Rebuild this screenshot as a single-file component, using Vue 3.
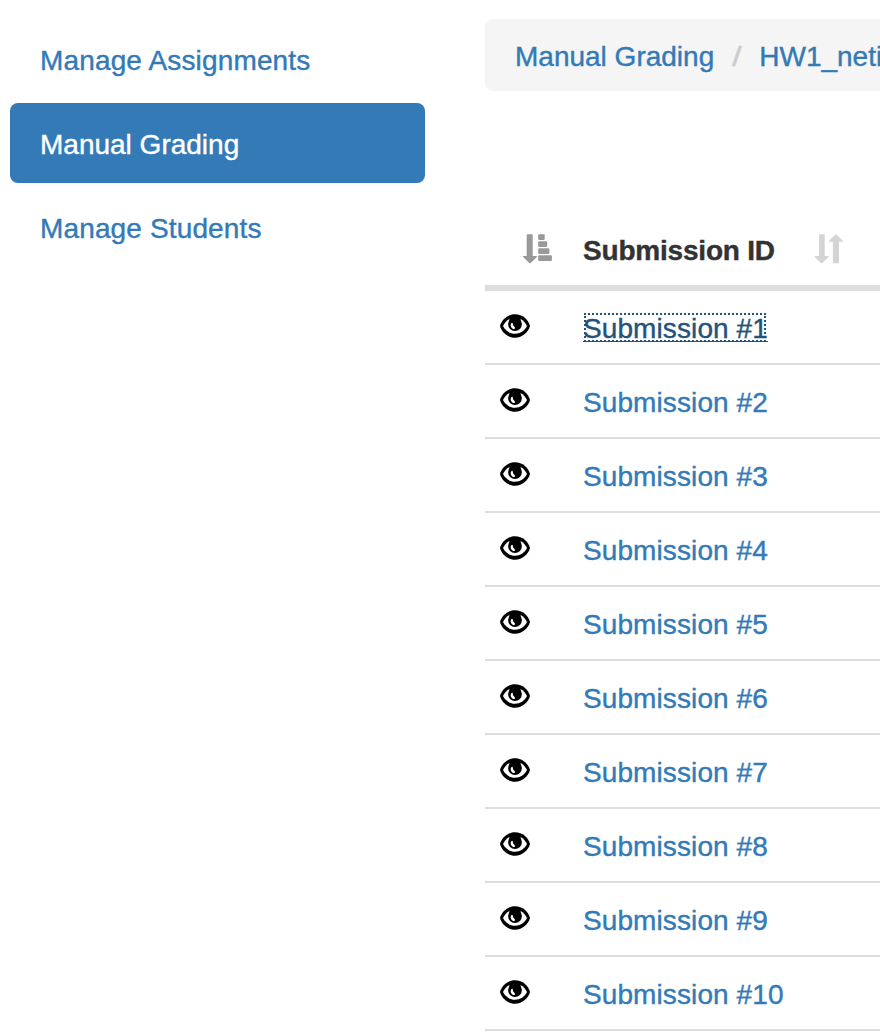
<script setup>
const rows = Array.from({ length: 10 }, (_, i) => i + 1)
</script>

<template>
  <main class="page">
    <nav class="side">
      <a class="link assignments">Manage Assignments</a>
      <a class="link active">Manual Grading</a>
      <a class="link students">Manage Students</a>
    </nav>
    <section class="content">
      <div class="crumbs">
        <a>Manual Grading</a>
        <i class="slash">/</i>
        <a>HW1_neti</a>
      </div>
      <div class="head">
        <svg class="sort" width="32" height="32" viewBox="0 0 32 32">
          <path d="M5.5 1.3h4.400q.8 0 .8.8V23h3.600q1.300 0 .6 1l-6.200 6q-.7.7-1.400 0l-6.200-6q-.7-1 .6-1h3V2.100q0-.8.8-.8z" />
          <rect x="16.2" y="1.3" width="6.5" height="5.6" rx="1" />
          <rect x="16.2" y="8.3" width="9" height="5.6" rx="1" />
          <rect x="16.2" y="15.3" width="11.2" height="5.6" rx="1" />
          <rect x="16.2" y="22.3" width="13.7" height="5.6" rx="1" />
        </svg>
        <b>Submission ID</b>
        <svg class="both" width="32" height="32" viewBox="0 0 32 32">
          <path d="M6 1.3h3.900q.8 0 .8.8V23H14q1.300 0 .6 1l-6.200 6q-.7.7-1.400 0l-6.200-6q-.7-1 .6-1h3.700V2.100q0-.8.8-.8zM19.700 30.200h4.500q.8 0 .8-.8V8.700h3.200q1.300 0 .6-1l-6.200-6q-.7-.7-1.400 0l-6.200 6q-.7 1 .6 1h3.300v20.700q0 .8.8.8z" />
        </svg>
      </div>
      <div v-for="n in rows" :key="n" class="row">
        <svg class="eye" width="30" height="24" viewBox="0 0 30 24">
          <path d="M0 12C1.500 6 7.500 .3 15 .3S28.500 6 30 12C28.500 18 22.500 23.700 15 23.700S1.500 18 0 12z" />
          <path class="white" d="M3 12C4.300 9 6.600 6.500 9.500 4.900H20.500C23.400 6.500 25.700 9 27 12C24.500 16.800 20.200 19.700 15 19.700S5.500 16.800 3 12z" />
          <path d="M9.500 5L12 3H18L20.500 5V7H9.500z" />
          <circle cx="15" cy="10.100" r="6.900" />
          <path class="white" d="M11.500 9C10.100 10.300 10.500 13.500 12.700 14.800Q14.600 15.700 15 13.900Q14.800 12.900 13.800 12.300Q12.800 11.500 12.900 10Q12.600 8.300 11.500 9z" />
        </svg>
        <a :class="{ focus: n === 1 }">Submission #{{ n }}</a>
      </div>
    </section>
  </main>
</template>

<style>
body { background: #fff; }
</style>
<style scoped>
.page { display: flex; width: 880px; height: 1034px; overflow: hidden; font: 28px/40px "Liberation Sans", Arial, sans-serif; color: #337ab7; -webkit-text-stroke: 0.4px currentColor; }
.side { width: 415px; padding: 19px 0 0 10px; display: flex; flex-direction: column; gap: 4px; flex: none; }
.link { height: 80px; box-sizing: border-box; padding: 22px 30px 0; border-radius: 8px; }
.assignments { letter-spacing: 0.15px; }
.students { letter-spacing: 0.14px; }
.active { background: #337ab7; color: #fff; }
.content { margin-left: 60px; padding-top: 19px; width: 395px; flex: none; }
.crumbs { height: 72px; box-sizing: border-box; padding: 18px 0 0 30px; background: #f5f5f5; border-radius: 8px 0 0 8px; white-space: nowrap; display: flex; }
.slash { width: 8px; margin: 0 18.500px; flex: none; font-style: normal; color: #ccc; transform: scaleX(1.25); }
.head { height: 76px; margin-top: 118px; border-bottom: 6px solid #ddd; display: flex; color: #333; }
.head svg { flex: none; }
.sort { margin: 24px 29px 0 37px; fill: #999; }
.head b { margin-top: 22px; width: 231px; letter-spacing: -0.2px; white-space: nowrap; }
.both { margin: 24px 0 0 0; fill: #d4d4d4; }
.row { height: 72px; border-bottom: 2px solid #ddd; display: flex; align-items: flex-start; }
.eye { margin: 23px 53px 0 15px; flex: none; }
.white { fill: #fff; }
.row a { margin-top: 18px; letter-spacing: 0.1px; }
.row .focus { position: relative; color: #23527c; }
.focus::before { content: ""; position: absolute; left: 0; right: 0; top: 32px; height: 1px; background: #23527c; }
.focus::after { content: ""; position: absolute; box-sizing: border-box; left: 1px; right: 2px; top: 4px; height: 29px; border: 2px dotted #23527c; }
</style>
